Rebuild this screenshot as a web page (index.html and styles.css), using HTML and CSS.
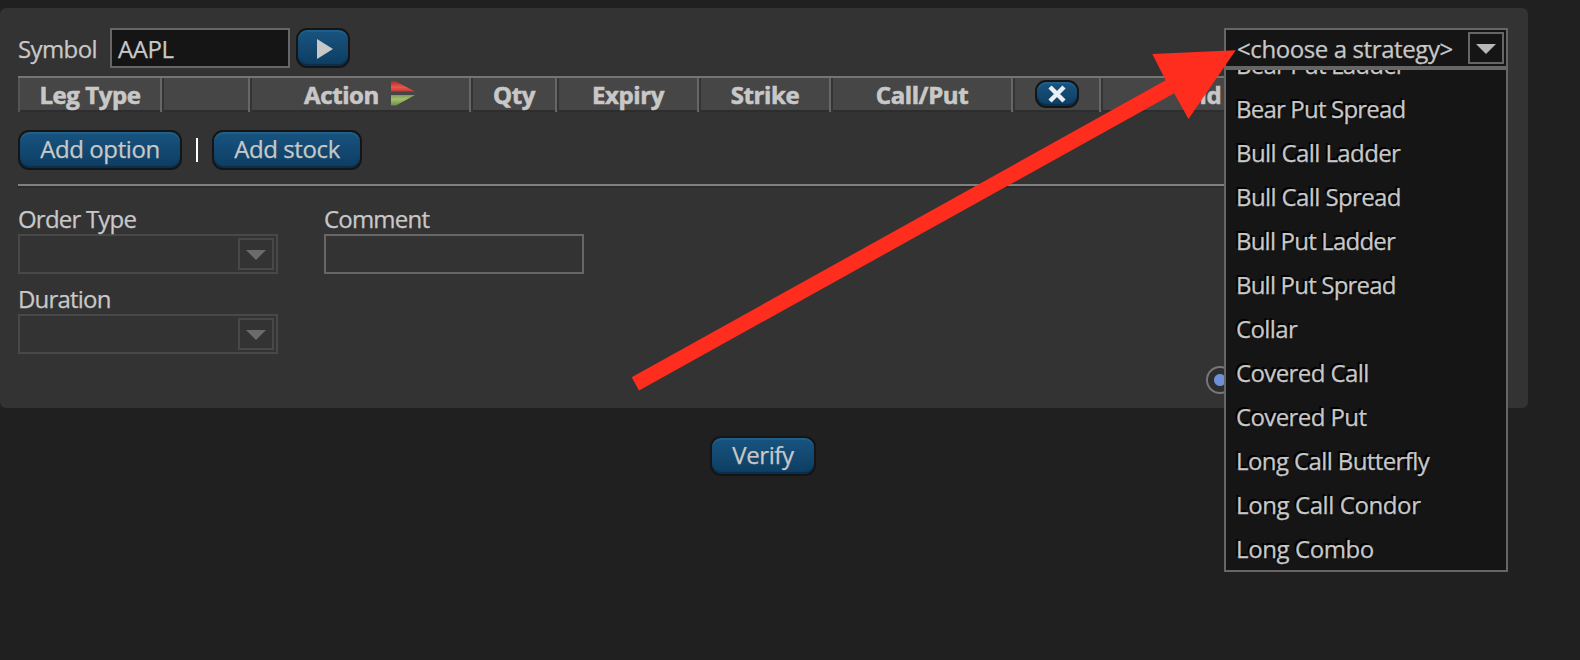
FILE: index.html
```html
<!DOCTYPE html>
<html lang="en">
<head>
<meta charset="utf-8">
<title>Strategy order ticket</title>
<link rel="stylesheet" href="styles.css">
</head>
<body>
<main class="ticket">
  <section class="panel">
    <div class="top-row">
      <label class="symbol-label snug">Symbol</label>
      <div class="field symbol-field">AAPL</div>
      <button class="btn go-btn"><svg width="16" height="22" viewBox="0 0 16 22"><path d="M0 1 16 11 0 21Z" fill="#c8c8c8"/></svg></button>
      <div class="strategy">
        <div class="select strategy-select">
          <span class="strategy-value">&lt;choose a strategy&gt;</span>
          <span class="drop"><svg width="20" height="10" viewBox="0 0 20 10"><path d="M0 0H20L10 10Z"/></svg></span>
        </div>
        <div class="menu">
          <ul class="menu-list">
            <li class="tight">Bear Put Ladder</li>
            <li class="tight">Bear Put Spread</li>
            <li class="snug">Bull Call Ladder</li>
            <li class="snug">Bull Call Spread</li>
            <li class="tight">Bull Put Ladder</li>
            <li class="tight">Bull Put Spread</li>
            <li class="snug">Collar</li>
            <li class="snug">Covered Call</li>
            <li class="snug">Covered Put</li>
            <li class="snug">Long Call Butterfly</li>
            <li>Long Call Condor</li>
            <li>Long Combo</li>
          </ul>
        </div>
      </div>
    </div>

    <div class="legs-head">
      <div class="cell">Leg Type</div>
      <div class="cell"></div>
      <div class="cell action"><span>Action</span>
        <svg width="25" height="26" viewBox="0 0 25 26">
          <defs>
            <linearGradient id="r" x1="0" y1="0" x2="0" y2="1"><stop offset="0" stop-color="#b82820"/><stop offset=".6" stop-color="#e85850"/><stop offset="1" stop-color="#c03a30"/></linearGradient>
            <linearGradient id="g" x1="0" y1="0" x2="0" y2="1"><stop offset="0" stop-color="#7f9a58"/><stop offset=".4" stop-color="#a4c070"/><stop offset="1" stop-color="#6a8e40"/></linearGradient>
          </defs>
          <path d="M0 0H4L24 10.500H0Z" fill="url(#r)"/><path d="M0 14H24L5 24.500H0Z" fill="url(#g)"/>
        </svg>
      </div>
      <div class="cell">Qty</div>
      <div class="cell">Expiry</div>
      <div class="cell">Strike</div>
      <div class="cell">Call/Put</div>
      <div class="cell"><button class="btn clear-btn"><svg width="18" height="18" viewBox="0 0 18 18"><path d="M2 2 16 16M16 2 2 16" stroke="#e8eef2" stroke-width="4.500"/></svg></button></div>
      <div class="cell">Bid</div>
      <div class="cell"></div>
    </div>

    <div class="add-row">
      <button class="btn add-option"><span>Add option</span></button>
      <i class="bar"></i>
      <button class="btn add-stock"><span>Add stock</span></button>
    </div>

    <div class="rule"></div>

    <div class="form">
      <div class="form-col">
        <label class="tight">Order Type</label>
        <div class="select disabled"><span class="drop"><svg width="20" height="10" viewBox="0 0 20 10"><path d="M0 0H20L10 10Z"/></svg></span></div>
        <label class="tight">Duration</label>
        <div class="select disabled"><span class="drop"><svg width="20" height="10" viewBox="0 0 20 10"><path d="M0 0H20L10 10Z"/></svg></span></div>
      </div>
      <div class="form-col">
        <label class="tight">Comment</label>
        <div class="field"></div>
      </div>
    </div>
    <div class="radio-row"><span class="radio"></span></div>
  </section>
  <div class="verify-row"><button class="btn verify"><span>Verify</span></button></div>
  <svg class="pointer" width="1580" height="660" viewBox="0 0 1580 660"><path d="M631.700 377.300 1165.700 80.300 1152.300 54.000 1235.700 50.300 1188.500 119 1174.200 93.300 639 390.500Z" fill="#ff2d1e"/></svg>
</main>
</body>
</html>
```

FILE: styles.css
```css
* { box-sizing: border-box; }
body {
  margin: 0;
  background: #202020;
  color: #c8c8c8;
  font: 24px/32px "Open Sans", "Noto Sans", sans-serif;
  letter-spacing: -0.4px;
  -webkit-text-stroke: 0.25px currentColor;
}
svg { display: block; flex: none; }
.snug { letter-spacing: -0.6px; }
.tight { letter-spacing: -0.8px; }
.ticket { position: relative; width: 1580px; height: 660px; padding-top: 8px; overflow: hidden; }
.panel {
  width: 1528px;
  height: 400px;
  padding: 20px 20px 0 18px;
  background: #333;
  border-radius: 6px;
}
.top-row { display: flex; height: 48px; align-items: flex-start; }
.symbol-label { width: 92px; line-height: 41px; }
.field { height: 40px; border: 2px solid #666; }
.symbol-field { width: 180px; margin-right: 6px; padding-left: 6px; background: #151515; line-height: 37px; }
.btn {
  display: flex;
  align-items: center;
  justify-content: center;
  height: 40px;
  padding: 0;
  border: 2px solid #151515;
  border-radius: 11px;
  background: linear-gradient(#185480, #0d3d61);
  box-shadow: inset 0 2px 1px #1f608d, inset 0 -2px 1px #0a2e4b;
  color: #c8c8c8;
  font: inherit;
  letter-spacing: inherit;
}
.btn span { line-height: 34px; margin-bottom: 2px; }
.go-btn { width: 54px; }
.go-btn svg { margin: 1px 0 0 3px; }
.strategy { position: relative; z-index: 2; width: 284px; margin-left: auto; }
.select { display: flex; justify-content: flex-end; height: 40px; padding: 2px; border: 2px solid #666; }
.drop { display: flex; align-items: center; justify-content: center; width: 36px; height: 32px; padding-top: 1px; border: 2px solid #666; }
.drop path { fill: #b5b9b5; }
.strategy-select { justify-content: space-between; padding-left: 11px; background: #151515; }
.strategy-value { line-height: 34px; white-space: nowrap; }
.menu {
  position: absolute;
  top: 40px;
  left: 0;
  width: 284px;
  height: 504px;
  overflow: hidden;
  border: 2px solid #666;
  background: #151515;
}
.menu-list { margin: -27px 0 0; padding: 0 0 0 10px; list-style: none; line-height: 44px; text-shadow: -2px -2px 0 #000; white-space: nowrap; }
.legs-head {
  display: grid;
  grid-template-columns: 144px 88px 221px 86px 142px 132px 182px 88px 203px 1fr;
  height: 36px;
  border-top: 2px solid #757575;
  border-bottom: 2px solid #2d2d2d;
  background: #464646;
  font-weight: 700;
  -webkit-text-stroke-width: 0.6px;
}
.cell {
  display: flex;
  align-items: center;
  justify-content: center;
  height: 34px;
  border-left: 2px solid #343434;
  border-right: 2px solid #666;
  line-height: 34px;
}
.cell:first-child { border-left-color: #555; }
.action { gap: 12px; padding-right: 1px; }
.action svg { margin-top: -3px; }
.clear-btn { width: 44px; height: 28px; margin-top: -2px; }
.add-row { display: flex; align-items: center; height: 40px; margin-top: 18px; }
.add-option { width: 164px; }
.add-stock { width: 150px; }
.bar { width: 2px; height: 24px; margin: 0 14px; background: #fff; }
.rule { height: 4px; margin-top: 14px; border-top: 2px solid #808080; background: #2b2b2b; }
.form { display: flex; gap: 46px; margin-top: 12px; }
.form-col { display: flex; flex-direction: column; width: 260px; }
.form-col label { position: relative; z-index: 1; height: 34px; line-height: 38px; }
.form-col .select + label { height: 40px; line-height: 49px; }
.disabled, .disabled .drop { border-color: #484848; }
.disabled .drop path { fill: #6b6b6b; }
.radio-row { display: flex; margin: 12px 0 0 1188px; }
.radio { width: 28px; height: 28px; border: 2px solid #777; border-radius: 50%; background: radial-gradient(circle, #6c91d8 5.500px, #2d2d2d 6.500px); }
.verify-row { display: flex; padding: 28px 0 0 710px; }
.verify { width: 106px; }
.pointer { position: absolute; z-index: 3; top: 0; left: 0; pointer-events: none; }
```
